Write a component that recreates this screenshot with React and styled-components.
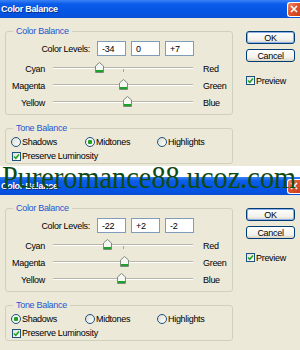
import React from 'react';
import styled, { createGlobalStyle } from 'styled-components';

const dialogs = [
  { levels: [-34, 0, 7], tone: 'Midtones', height: 166 },
  { levels: [-22, 2, -2], tone: 'Shadows', height: 173 },
];

const channels = [
  ['Cyan', 'Red'],
  ['Magenta', 'Green'],
  ['Yellow', 'Blue'],
];

const tones = ['Shadows', 'Midtones', 'Highlights'];

const fmt = (v) => (v > 0 ? `+${v}` : `${v}`);

function Thumb() {
  return (
    <svg width="9" height="11" viewBox="0 0 9 11">
      <path d="M0.5 10.5 V4 L4.5 0.5 L8.5 4 V10.5 Z" fill="#f6f6f2" stroke="#7d8a80" />
      <rect x="1" y="8" width="7" height="2" fill="#1fa02a" />
    </svg>
  );
}

function CheckBox() {
  return (
    <Box>
      <svg width="7" height="7" viewBox="0 0 7 7">
        <path d="M1 3.5 L2.8 5.3 L6 1.5" fill="none" stroke="#21a121" strokeWidth="1.6" />
      </svg>
    </Box>
  );
}

function Dialog({ levels, tone, height }) {
  return (
    <Window $height={height}>
      <TitleBar>
        <Title>Color Balance</Title>
        <CloseButton>
          <svg width="8" height="8" viewBox="0 0 8 8">
            <path d="M1 1 L7 7 M7 1 L1 7" stroke="#fff" strokeWidth="1.6" />
          </svg>
        </CloseButton>
      </TitleBar>
      <Body>
        <Main>
          <Group $pad="9px 0 3px 0">
            <Legend>Color Balance</Legend>
            <LevelsRow>
              <LevelsLabel>Color Levels:</LevelsLabel>
              {levels.map((v, i) => (
                <Input key={i}>{fmt(v)}</Input>
              ))}
            </LevelsRow>
            {channels.map(([from, to], i) => (
              <SliderRow key={from}>
                <ChannelLabel>{from}</ChannelLabel>
                <Track>
                  <Tick />
                  <ThumbWrap style={{ left: 70 + levels[i] * 0.7 - 4.5 }}>
                    <Thumb />
                  </ThumbWrap>
                </Track>
                <EndLabel>{to}</EndLabel>
              </SliderRow>
            ))}
          </Group>
          <Group $pad="6px 0 0 0">
            <Legend>Tone Balance</Legend>
            <RadioRow>
              {tones.map((t) => (
                <RadioItem key={t}>
                  <Radio $on={t === tone} />
                  <Text>{t}</Text>
                </RadioItem>
              ))}
            </RadioRow>
            <CheckRow>
              <CheckBox />
              <Text>Preserve Luminosity</Text>
            </CheckRow>
          </Group>
        </Main>
        <Side>
          <Button $default>OK</Button>
          <Button>Cancel</Button>
          <PreviewRow>
            <CheckBox />
            <Text>Preview</Text>
          </PreviewRow>
        </Side>
      </Body>
    </Window>
  );
}

export default function App() {
  return (
    <>
      <GlobalStyle />
      <Page>
        {dialogs.map((d, i) => (
          <Dialog key={i} {...d} />
        ))}
        <Watermark>Pureromance88.ucoz.com</Watermark>
      </Page>
    </>
  );
}

const GlobalStyle = createGlobalStyle`
  html, body {
    margin: 0;
    padding: 0;
    background: #fff;
  }
  body {
    font-family: "Liberation Sans", Arial, sans-serif;
  }
`;

const Page = styled.div`
  position: relative;
  width: 300px;
  height: 350px;
  overflow: hidden;
  background: #fff;
  display: flex;
  flex-direction: column;
  gap: 11px;
`;

const Window = styled.div`
  flex-shrink: 0;
  height: ${(p) => p.$height}px;
  overflow: hidden;
  background: #ece9d8;
  display: flex;
  flex-direction: column;
`;

const TitleBar = styled.div`
  flex-shrink: 0;
  height: 18px;
  display: flex;
  align-items: center;
  justify-content: space-between;
  padding-left: 1px;
  background: linear-gradient(#3a82f6 0%, #0b5ce9 22%, #0454e4 70%, #0850d6 100%);
`;

const Title = styled.span`
  color: #fff;
  font-size: 9px;
  font-weight: bold;
  letter-spacing: -0.3px;
  text-shadow: 1px 1px 0 #0b2f8a;
`;

const CloseButton = styled.div`
  width: 12px;
  height: 13px;
  display: flex;
  align-items: center;
  justify-content: center;
  border: 1px solid #fff;
  border-right: none;
  border-radius: 3px 0 0 3px;
  background: linear-gradient(135deg, #ef8c6c 0%, #e0542c 45%, #c8401c 100%);
`;

const Body = styled.div`
  display: flex;
  padding: 13px 0 0 5px;
`;

const Main = styled.div`
  width: 228px;
  display: flex;
  flex-direction: column;
  gap: 13px;
`;

const Side = styled.div`
  margin-left: 13px;
  display: flex;
  flex-direction: column;
`;

const Group = styled.div`
  position: relative;
  border: 1px solid #d0d0bf;
  border-radius: 3px;
  padding: ${(p) => p.$pad};
`;

const Legend = styled.span`
  position: absolute;
  top: -6px;
  left: 7px;
  padding: 0 3px;
  background: #ece9d8;
  color: #1f55d0;
  font-size: 9px;
  line-height: 11px;
  letter-spacing: -0.3px;
`;

const Text = styled.span`
  color: #000;
  font-size: 9px;
  letter-spacing: -0.3px;
  white-space: nowrap;
`;

const LevelsRow = styled.div`
  display: flex;
  align-items: center;
  gap: 5px;
  height: 15px;
  margin-bottom: 4px;
`;

const LevelsLabel = styled(Text)`
  width: 84px;
  margin-right: 2px;
  text-align: right;
`;

const Input = styled.div`
  box-sizing: border-box;
  width: 29px;
  height: 15px;
  padding-left: 4px;
  display: flex;
  align-items: center;
  background: #fff;
  border: 1px solid #7f9db9;
  font-size: 9px;
  letter-spacing: -0.3px;
`;

const SliderRow = styled.div`
  display: flex;
  align-items: center;
  height: 17px;
`;

const ChannelLabel = styled(Text)`
  width: 39px;
  text-align: right;
`;

const EndLabel = styled(Text)`
  margin-left: 10px;
`;

const Track = styled.div`
  position: relative;
  width: 140px;
  height: 17px;
  margin-left: 8px;

  &::before {
    content: '';
    position: absolute;
    left: 0;
    right: 0;
    top: 7px;
    height: 1px;
    background: #b8b6a8;
    border-bottom: 1px solid #fff;
  }
`;

const Tick = styled.div`
  position: absolute;
  left: 70px;
  top: 9px;
  width: 1px;
  height: 3px;
  background: #a8a698;
`;

const ThumbWrap = styled.div`
  position: absolute;
  top: 2px;
  width: 9px;
  height: 11px;
  line-height: 0;
`;

const RadioRow = styled.div`
  display: grid;
  grid-template-columns: 74px 72px auto;
  align-items: center;
  height: 14px;
  padding-left: 5px;
`;

const RadioItem = styled.div`
  display: flex;
  align-items: center;
  gap: 1px;
`;

const Radio = styled.span`
  box-sizing: border-box;
  width: 10px;
  height: 10px;
  border-radius: 50%;
  border: 1px solid #1c5180;
  background: ${(p) =>
    p.$on
      ? 'radial-gradient(circle, #21a121 0 2px, #f4f4ee 2.5px)'
      : 'linear-gradient(135deg, #dcdcd4, #ffffff)'};
`;

const CheckRow = styled.div`
  display: flex;
  align-items: center;
  gap: 1px;
  height: 14px;
  padding-left: 6px;
`;

const Box = styled.span`
  box-sizing: border-box;
  width: 9px;
  height: 9px;
  display: flex;
  align-items: center;
  justify-content: center;
  border: 1px solid #1c5180;
  background: linear-gradient(135deg, #e0e0d8, #ffffff);
`;

const Button = styled.div`
  box-sizing: border-box;
  width: 49px;
  height: 13px;
  margin-bottom: 5px;
  display: flex;
  align-items: center;
  justify-content: center;
  border: 1px solid #003c74;
  border-radius: 3px;
  background: linear-gradient(#ffffff 0%, #f2f1ea 70%, #d8d3c6 100%);
  box-shadow: ${(p) => (p.$default ? 'inset 0 0 0 1px #8fb0ea' : 'none')};
  font-size: 9px;
  letter-spacing: -0.3px;
  color: #000;
`;

const PreviewRow = styled.div`
  display: flex;
  align-items: center;
  gap: 1px;
  margin-top: 7px;
  height: 13px;
`;

const Watermark = styled.div`
  position: absolute;
  left: 2px;
  top: 161px;
  font-family: "Liberation Serif", "Times New Roman", serif;
  font-size: 32px;
  line-height: 32px;
  color: #0f4a14;
  white-space: nowrap;
  transform: scaleX(0.885);
  transform-origin: left top;
`;
